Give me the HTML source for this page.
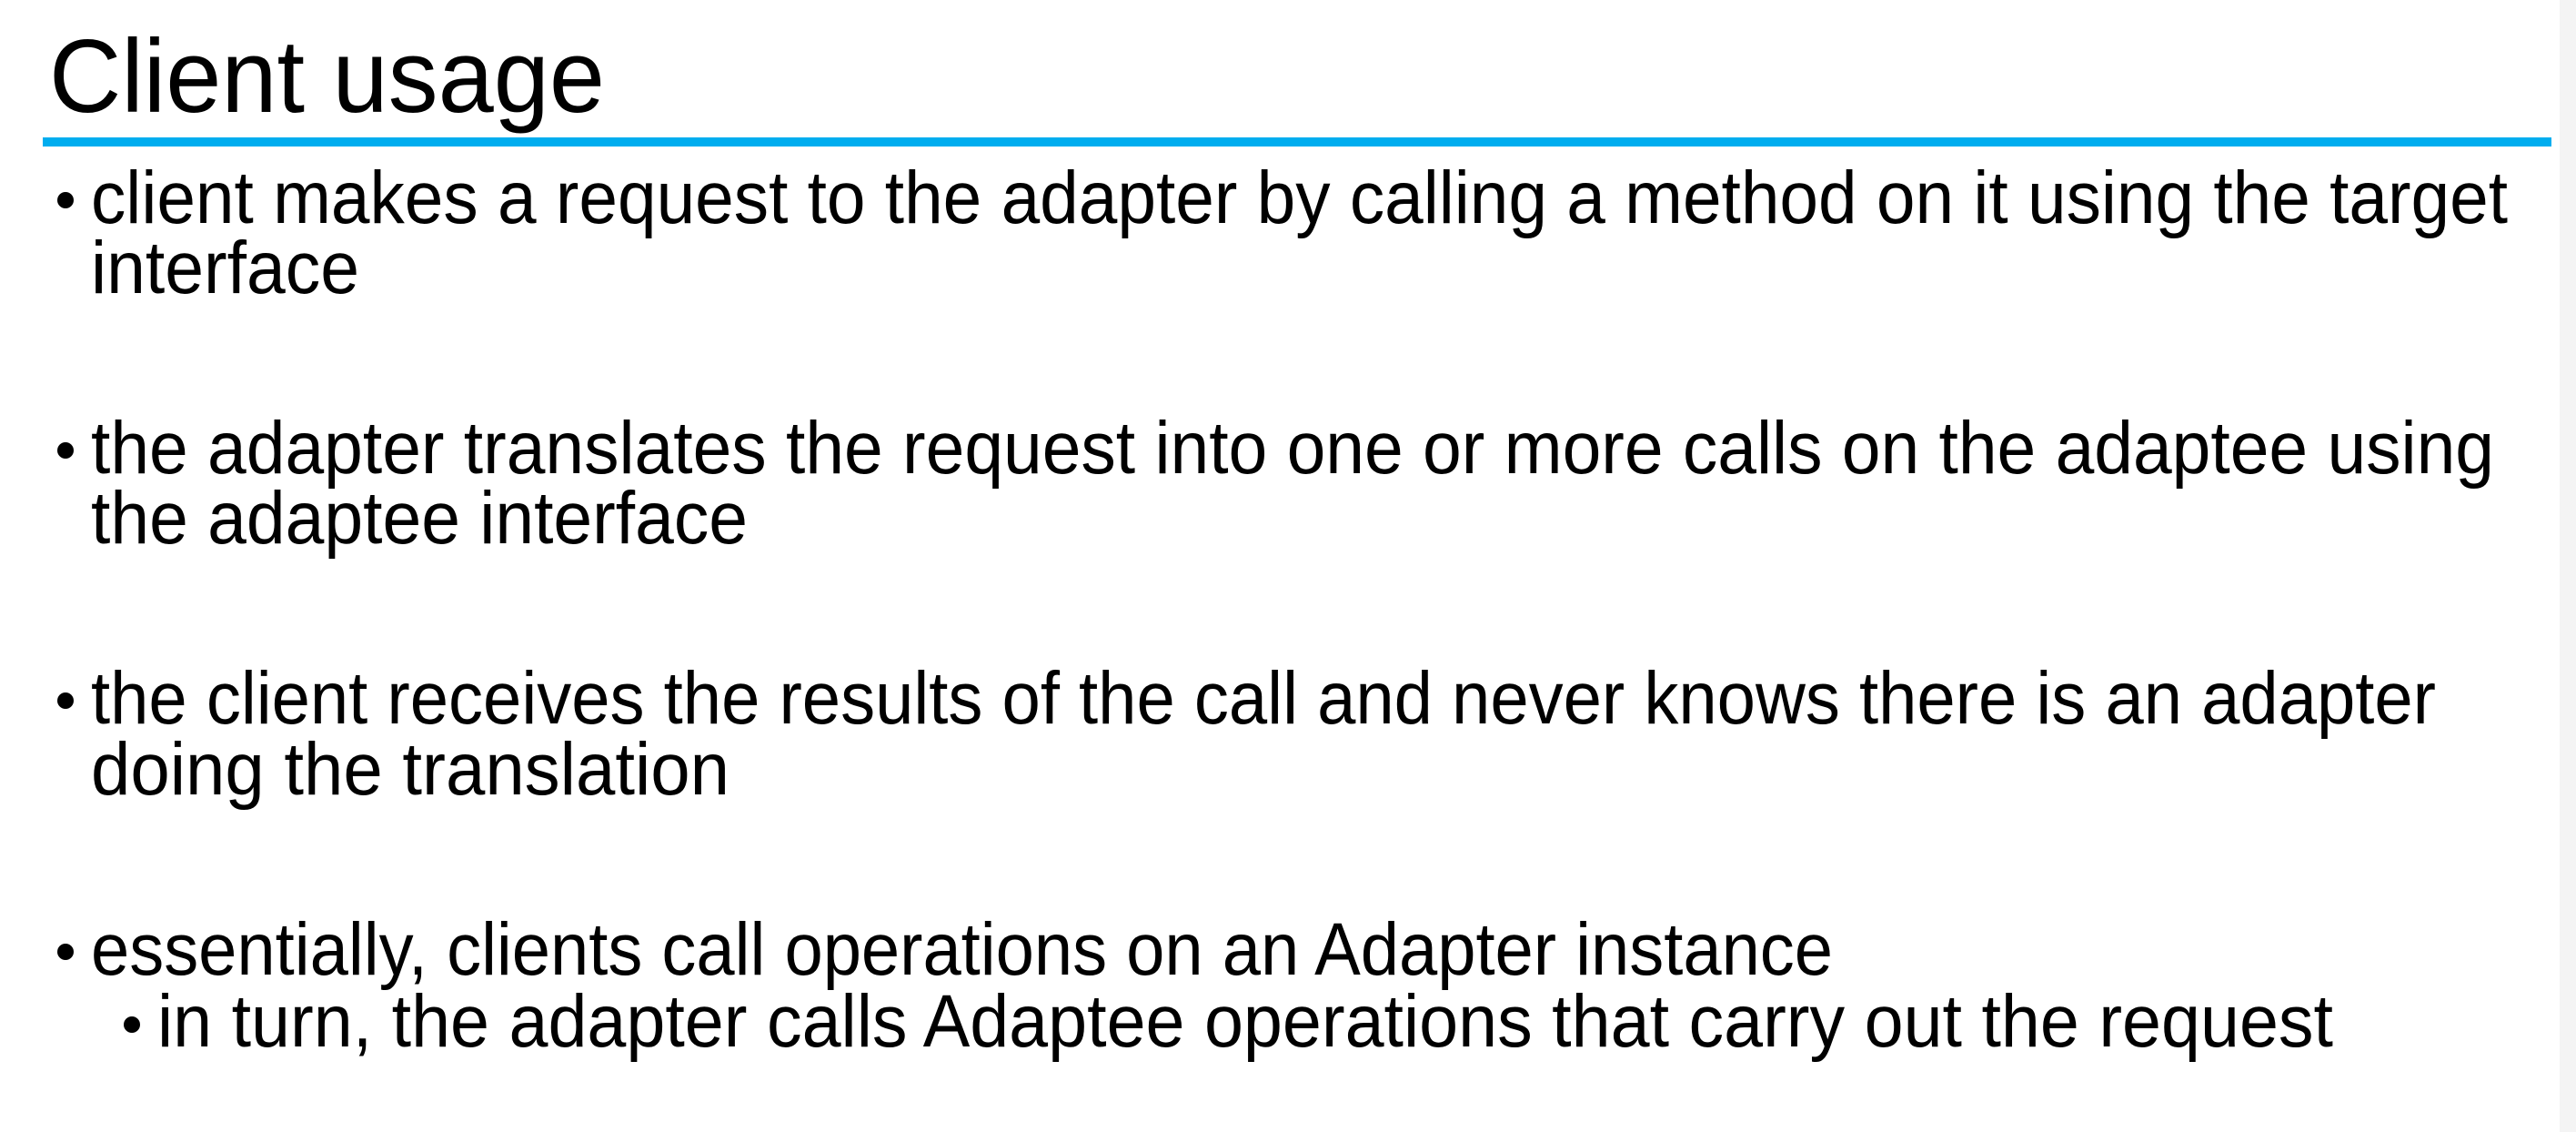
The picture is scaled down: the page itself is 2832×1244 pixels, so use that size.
<!DOCTYPE html>
<html><head><meta charset="utf-8"><style>
html,body{margin:0;padding:0;background:#fff;width:2832px;height:1244px;overflow:hidden}
svg{display:block}
text{font-family:"Liberation Sans",sans-serif;fill:#000}
</style></head><body>
<svg width="2832" height="1244" viewBox="0 0 2832 1244" xmlns="http://www.w3.org/2000/svg">
<rect x="0" y="0" width="2832" height="1244" fill="#fff"/>
<rect x="2814" y="0" width="18" height="1244" fill="#f4f4f4"/>
<text x="54" y="123" font-size="114" textLength="611" lengthAdjust="spacingAndGlyphs">Client usage</text>
<rect x="47" y="151" width="2758" height="10" fill="#00adef"/>
<g font-size="82">
<circle cx="72" cy="220" r="9" fill="#000"/>
<text x="100" y="245" textLength="2657" lengthAdjust="spacingAndGlyphs">client makes a request to the adapter by calling a method on it using the target</text>
<text x="100" y="322" textLength="295" lengthAdjust="spacingAndGlyphs">interface</text>
<circle cx="72" cy="495" r="9" fill="#000"/>
<text x="100" y="520" textLength="2642" lengthAdjust="spacingAndGlyphs">the adapter translates the request into one or more calls on the adaptee using</text>
<text x="100" y="597" textLength="722" lengthAdjust="spacingAndGlyphs">the adaptee interface</text>
<circle cx="72" cy="770" r="9" fill="#000"/>
<text x="100" y="795" textLength="2578" lengthAdjust="spacingAndGlyphs">the client receives the results of the call and never knows there is an adapter</text>
<text x="100" y="873" textLength="702" lengthAdjust="spacingAndGlyphs">doing the translation</text>
<circle cx="72" cy="1046" r="9" fill="#000"/>
<text x="100" y="1071" textLength="1915" lengthAdjust="spacingAndGlyphs">essentially, clients call operations on an Adapter instance</text>
<circle cx="145" cy="1126" r="9" fill="#000"/>
<text x="173" y="1150" textLength="2392" lengthAdjust="spacingAndGlyphs">in turn, the adapter calls Adaptee operations that carry out the request</text>
</g>
</svg>
</body></html>
